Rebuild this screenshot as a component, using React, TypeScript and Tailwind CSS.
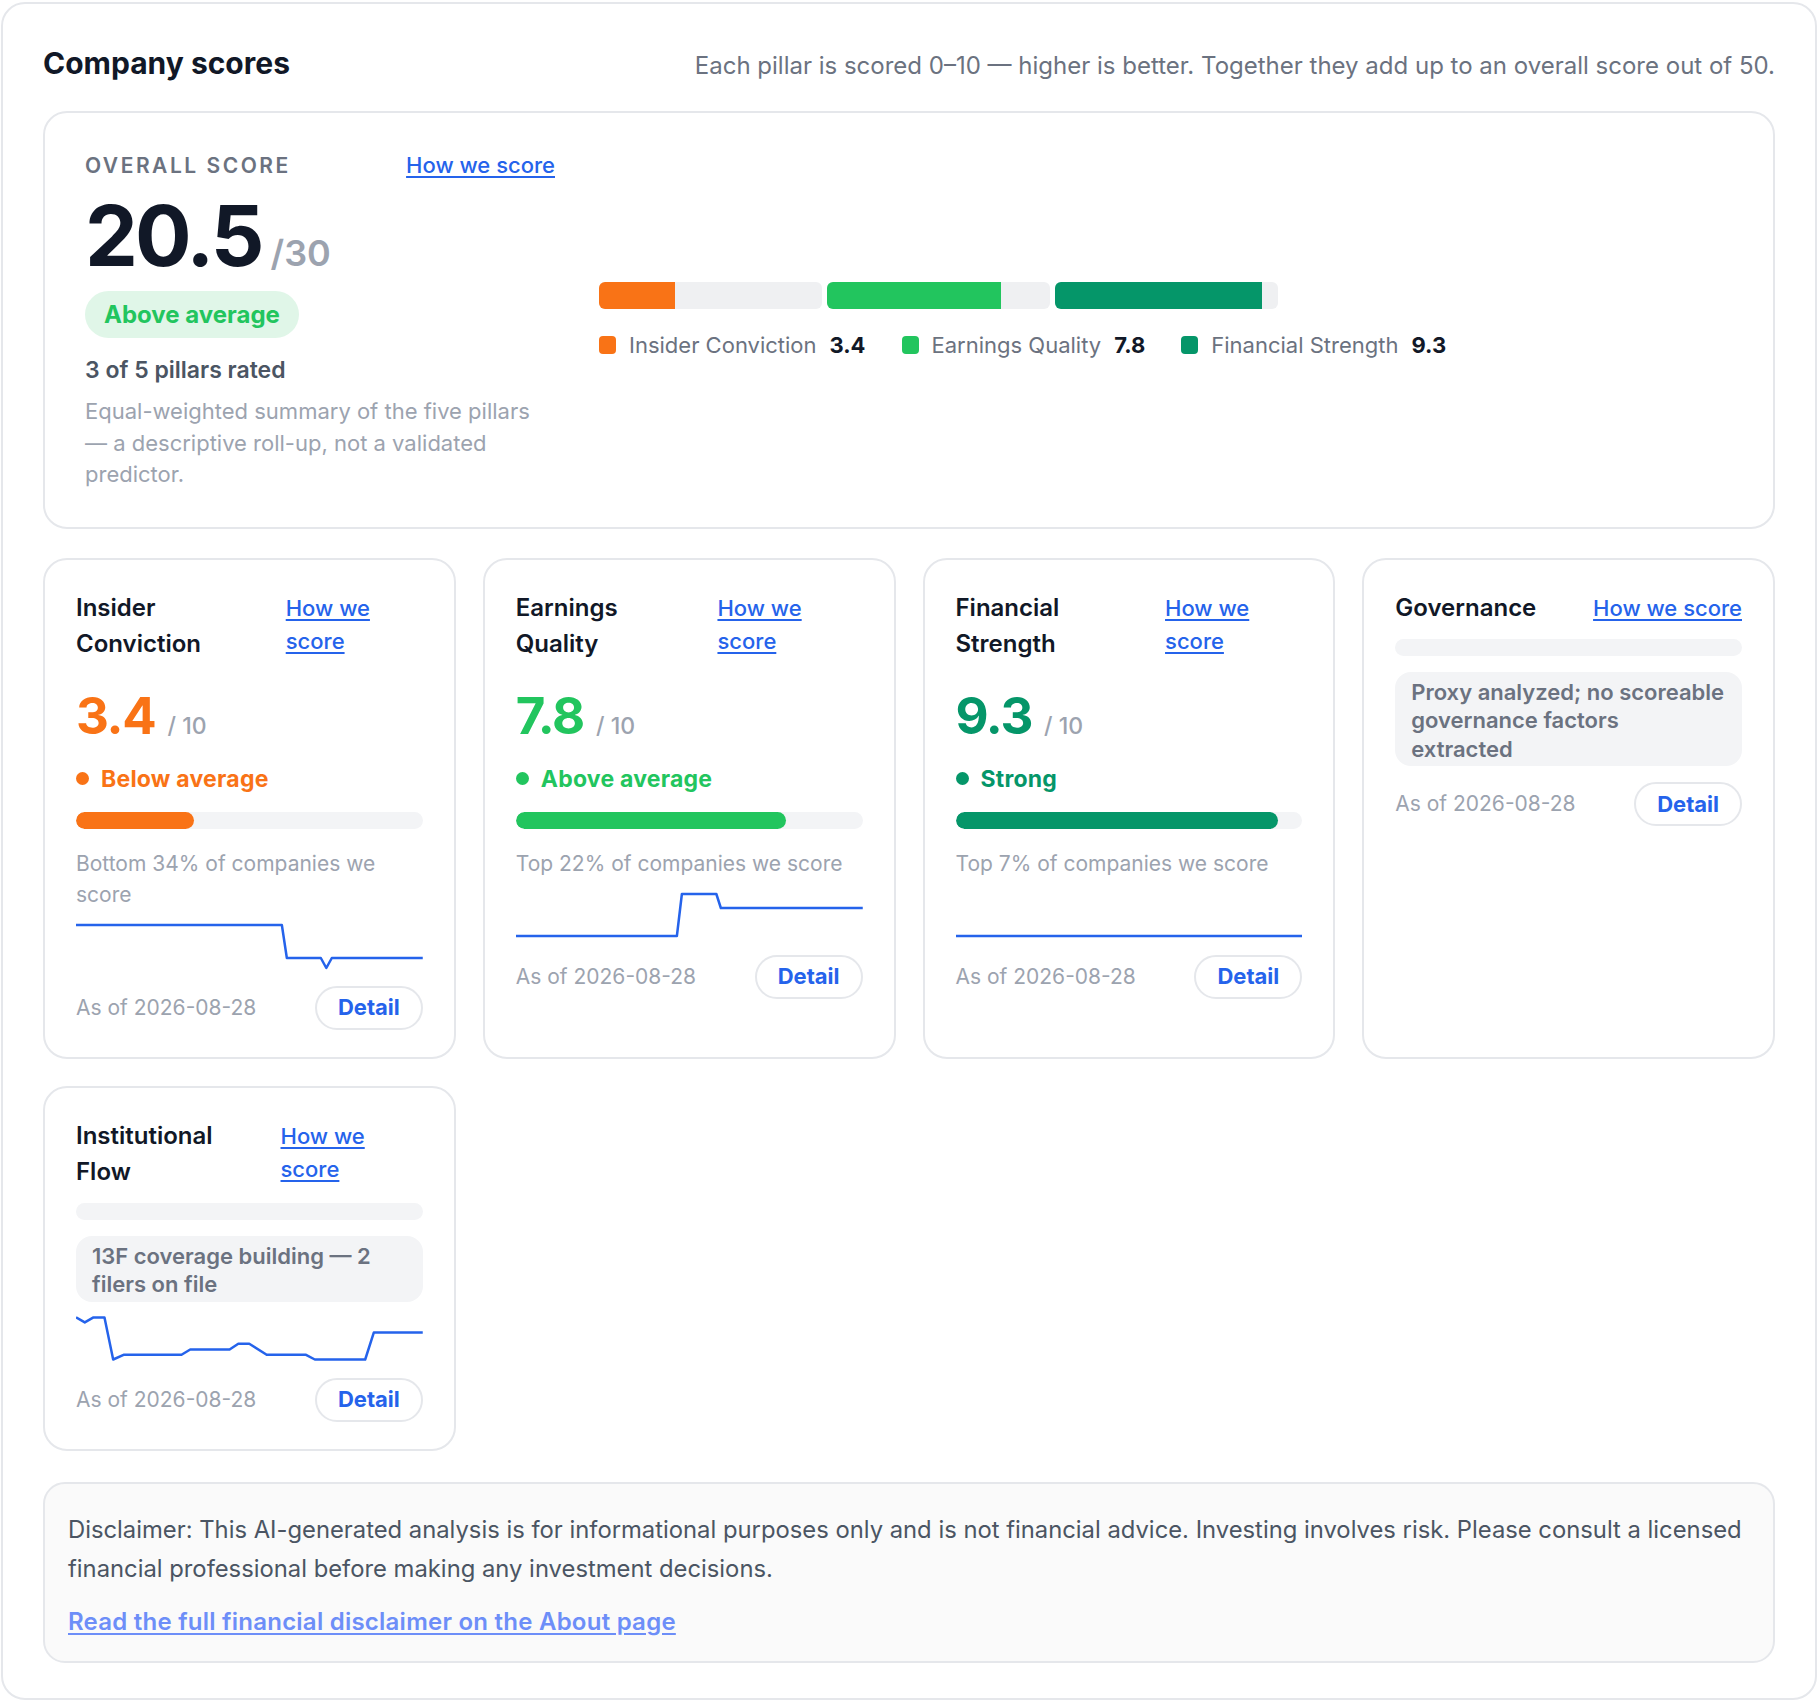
import type { ReactNode } from "react";

type Tone = "orange" | "green" | "emerald";

const toneText: Record<Tone, string> = {
  orange: "text-[#f97316]",
  green: "text-[#22c55e]",
  emerald: "text-[#059669]",
};

const toneBg: Record<Tone, string> = {
  orange: "bg-[#f97316]",
  green: "bg-[#22c55e]",
  emerald: "bg-[#059669]",
};

type Pillar = {
  name: string;
  score?: number;
  tone?: Tone;
  status?: string;
  percentile?: string;
  note?: ReactNode;
  spark?: string;
};

const pillars: Pillar[] = [
  {
    name: "Insider Conviction",
    score: 3.4,
    tone: "orange",
    status: "Below average",
    percentile: "Bottom 34% of companies we score",
    spark: "0,3 206,3 211,36 245,36 250.5,46 256,36 347,36",
  },
  {
    name: "Earnings Quality",
    score: 7.8,
    tone: "green",
    status: "Above average",
    percentile: "Top 22% of companies we score",
    spark: "0,45 161,45 166,3 200.5,3 205,17 347,17",
  },
  {
    name: "Financial Strength",
    score: 9.3,
    tone: "emerald",
    status: "Strong",
    percentile: "Top 7% of companies we score",
    spark: "0,45 347,45",
  },
  {
    name: "Governance",
    note: (
      <>
        Proxy analyzed; no scoreable governance factors
        <br />
        extracted
      </>
    ),
  },
  {
    name: "Institutional Flow",
    note: "13F coverage building — 2 filers on file",
    spark:
      "0,3.4 8.8,8.4 17.5,3.4 28.5,3.4 37.2,45.5 47.6,40.8 105.6,40.8 114.3,35.5 153.7,35.5 162.4,29.7 173.4,29.7 190.8,40.8 230.2,40.8 239,45.5 289.4,45.5 298,18.6 347,18.6",
  },
];

const Sparkline = ({ points }: { points: string }) => (
  <svg className="block w-full h-[48px]" viewBox="0 0 347 48" preserveAspectRatio="none" fill="none">
    <polyline
      points={points}
      stroke="#2563eb"
      strokeWidth="2.5"
      strokeLinejoin="round"
      vectorEffect="non-scaling-stroke"
    />
  </svg>
);

function PillarCard({ p }: { p: Pillar }) {
  return (
    <div className="flex flex-col rounded-[24px] border-2 border-[#e5e7eb] bg-white px-[31px] pt-[30px] pb-[27px]">
      {/* title + link */}
      <div className="flex items-start justify-between gap-4">
        <span className="text-[24px] leading-[36px] font-semibold text-[#111827]">{p.name}</span>
        <a href="#" className="pt-[2px] text-[22px] leading-[33px] font-medium text-[#2563eb] underline underline-offset-[3px]">
          How we score
        </a>
      </div>

      {p.score !== undefined && p.tone ? (
        <>
          <div className="mt-[28px] flex items-baseline">
            <span className={`text-[51px] leading-none font-bold tracking-tight ${toneText[p.tone]}`}>{p.score}</span>
            <span className="ml-[12px] text-[23px] leading-none font-medium text-[#9ca3af]">/ 10</span>
          </div>
          <div className="mt-[23px] flex items-center gap-[12px]">
            <span className={`w-[13px] h-[13px] rounded-full ${toneBg[p.tone]}`} />
            <span className={`text-[23px] leading-[30px] font-bold tracking-[0.01em] ${toneText[p.tone]}`}>{p.status}</span>
          </div>
          <div className="mt-[18px] h-[17px] rounded-full bg-[#f3f4f6] overflow-hidden">
            <div className={`h-full rounded-full ${toneBg[p.tone]}`} style={{ width: `${p.score * 10}%` }} />
          </div>
          <p className="mt-[19px] text-[21px] leading-[31px] text-[#9ca3af]">{p.percentile}</p>
          {p.spark && (
            <div className="mt-[12px]">
              <Sparkline points={p.spark} />
            </div>
          )}
        </>
      ) : (
        <>
          <div className="mt-[13px] h-[17px] rounded-full bg-[#f3f4f6]" />
          <div className="mt-[16px] rounded-[16px] bg-[#f3f4f6] px-[16px] pt-[6px] pb-[3px] text-[22px] leading-[28.5px] font-semibold text-[#6b7280]">
            {p.note}
          </div>
          {p.spark && (
            <div className="mt-[12px]">
              <Sparkline points={p.spark} />
            </div>
          )}
        </>
      )}

      {/* footer */}
      <div className="mt-[16px] flex items-center justify-between">
        <span className="text-[21px] text-[#9ca3af]">As of 2026-08-28</span>
        <button className="h-[44px] px-[21px] rounded-full border-2 border-[#e5e7eb] bg-white text-[22px] font-bold text-[#2563eb]">
          Detail
        </button>
      </div>
    </div>
  );
}

const segments: { label: string; score: number; tone: Tone }[] = [
  { label: "Insider Conviction", score: 3.4, tone: "orange" },
  { label: "Earnings Quality", score: 7.8, tone: "green" },
  { label: "Financial Strength", score: 9.3, tone: "emerald" },
];

export default function App() {
  return (
    <div className="min-h-screen bg-white px-[1px] pt-[2px] font-[Inter,'Noto_Sans',sans-serif] antialiased">
      <div className="rounded-[24px] border-2 border-[#e5e7eb] bg-white px-[40px] pt-[41px] pb-[35px]">
        {/* Header */}
        <div className="flex items-baseline justify-between">
          <h1 className="text-[30px] leading-[36px] font-bold text-[#111827]">Company scores</h1>
          <p className="text-[24px] text-[#6b7280]">
            Each pillar is scored 0–10 — higher is better. Together they add up to an overall score out of 50.
          </p>
        </div>

        {/* Overall */}
        <div className="mt-[27px] flex items-center gap-[44px] rounded-[24px] border-2 border-[#e5e7eb] px-[40px] pt-[38px] pb-[36px]">
          <div className="w-[470px] shrink-0">
            <div className="flex items-baseline justify-between">
              <span className="text-[21px] leading-[28px] font-semibold tracking-[0.12em] text-[#6b7280]">OVERALL SCORE</span>
              <a href="#" className="text-[22px] leading-[28px] font-medium text-[#2563eb] underline underline-offset-[3px]">
                How we score
              </a>
            </div>
            <div className="mt-[14px] flex items-baseline">
              <span className="text-[84px] leading-none font-bold tracking-[-0.035em] text-[#111827]">20.5</span>
              <span className="ml-[9px] text-[36px] leading-none font-semibold text-[#9ca3af]">/30</span>
            </div>
            <div className="mt-[13px] inline-flex h-[47px] items-center rounded-full bg-[#e0f6e8] px-[19px] text-[24px] font-bold text-[#22c55e]">
              Above average
            </div>
            <div className="mt-[17px] text-[23px] leading-[30px] font-semibold text-[#4b5563]">3 of 5 pillars rated</div>
            <p className="mt-[11px] text-[22px] leading-[31.5px] text-[#9ca3af]">
              Equal-weighted summary of the five pillars — a descriptive roll-up, not a validated predictor.
            </p>
          </div>

          <div className="flex-1">
            <div className="flex w-[679px] gap-[5px]">
              {segments.map((s) => (
                <div key={s.label} className="flex-1 h-[27px] rounded-[6px] bg-[#eff0f2] overflow-hidden">
                  <div className={`h-full ${toneBg[s.tone]}`} style={{ width: `${s.score * 10}%` }} />
                </div>
              ))}
            </div>
            <div className="mt-[21px] flex items-center gap-[36px]">
              {segments.map((s) => (
                <div key={s.label} className="flex items-center">
                  <span className={`w-[17px] h-[18px] rounded-[4px] ${toneBg[s.tone]}`} />
                  <span className="ml-[13px] text-[22px] leading-[30px] text-[#6b7280]">{s.label}</span>
                  <span className="ml-[13px] text-[22px] leading-[30px] font-bold text-[#111827]">{s.score}</span>
                </div>
              ))}
            </div>
          </div>
        </div>

        {/* Pillars */}
        <div className="mt-[29px] grid grid-cols-4 gap-x-[27px] gap-y-[27px]">
          {pillars.map((p) => (
            <PillarCard key={p.name} p={p} />
          ))}
        </div>

        {/* Disclaimer */}
        <div className="mt-[31px] rounded-[22px] border-2 border-[#e5e7eb] bg-[#fafafa] px-[23px] pt-[26px] pb-[21px]">
          <p className="text-[23.8px] leading-[39px] text-[#4b5563]">
            Disclaimer: This AI-generated analysis is for informational purposes only and is not financial advice.
            Investing involves risk. Please consult a licensed financial professional before making any investment
            decisions.
          </p>
          <a href="#" className="mt-[16px] inline-block text-[24px] leading-[36px] font-semibold tracking-[0.01em] text-[#6d8ef8] underline underline-offset-[3px]">
            Read the full financial disclaimer on the About page
          </a>
        </div>
      </div>
    </div>
  );
}
